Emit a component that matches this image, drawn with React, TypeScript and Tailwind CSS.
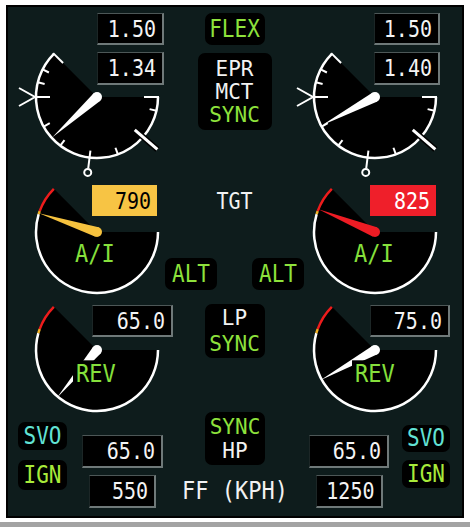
import React from 'react'

type Pt = [number, number]

const R = 61

const polar = (cx: number, cy: number, r: number, deg: number): Pt => {
  const a = (deg * Math.PI) / 180
  return [cx + r * Math.cos(a), cy - r * Math.sin(a)]
}

// arc drawn from `from` to `to` (math degrees, counter-clockwise)
const arcPath = (cx: number, cy: number, r: number, from: number, to: number) => {
  const [x1, y1] = polar(cx, cy, r, from)
  const [x2, y2] = polar(cx, cy, r, to)
  return `M ${x1} ${y1} A ${r} ${r} 0 ${to - from > 180 ? 1 : 0} 0 ${x2} ${y2}`
}

const piePath = (cx: number, cy: number, r: number, from: number, to: number) => {
  const [x1, y1] = polar(cx, cy, r, from)
  const [x2, y2] = polar(cx, cy, r, to)
  return `M ${cx} ${cy} L ${x1} ${y1} A ${r} ${r} 0 ${to - from > 180 ? 1 : 0} 0 ${x2} ${y2} Z`
}

type TickProps = { cx: number; cy: number; deg: number; r1: number; r2: number; w?: number; color?: string }

function Tick({ cx, cy, deg, r1, r2, w = 2, color = '#ffffff' }: TickProps) {
  const [x1, y1] = polar(cx, cy, r1, deg)
  const [x2, y2] = polar(cx, cy, r2, deg)
  return <line x1={x1} y1={y1} x2={x2} y2={y2} stroke={color} strokeWidth={w} />
}

function Needle({ cx, cy, deg, len, w, color }: { cx: number; cy: number; deg: number; len: number; w: number; color: string }) {
  const tip = polar(cx, cy, len, deg)
  const a = polar(cx, cy, w, deg + 90)
  const b = polar(cx, cy, w, deg - 90)
  return (
    <g fill={color}>
      <circle cx={cx} cy={cy} r={w} />
      <polygon points={`${a[0]},${a[1]} ${tip[0]},${tip[1]} ${b[0]},${b[1]}`} />
    </g>
  )
}

function EprDial({ cx, cy, deg, w, h }: { cx: number; cy: number; deg: number; w: number; h: number }) {
  const ring = polar(cx, cy, 76, 263)
  const lim1 = polar(cx, cy, 50, 319)
  const lim2 = polar(cx, cy, 80, 319)
  return (
    <svg width={w} height={h} className="block overflow-visible">
      <path d={piePath(cx, cy, R, 135, 360)} fill="#000" />
      <path d={arcPath(cx, cy, R, 135, 360)} fill="none" stroke="#fff" strokeWidth={2.5} />
      {[153, 166, 209, 233, 290, 347].map((a) => (
        <Tick key={a} cx={cx} cy={cy} deg={a} r1={54} r2={R} />
      ))}
      <Tick cx={cx} cy={cy} deg={135} r1={48} r2={R + 1} />
      <Tick cx={cx} cy={cy} deg={0} r1={47} r2={R + 1} />
      <Tick cx={cx} cy={cy} deg={180} r1={47} r2={R} />
      {/* max-rated chevron */}
      <polyline
        points={`${cx - 78},${cy - 9} ${cx - 62},${cy} ${cx - 78},${cy + 9}`}
        fill="none"
        stroke="#fff"
        strokeWidth={2}
      />
      <Tick cx={cx} cy={cy} deg={263} r1={54} r2={72} />
      <circle cx={ring[0]} cy={ring[1]} r={3.5} fill="none" stroke="#fff" strokeWidth={2} />
      {/* thrust limit bar */}
      <line x1={lim1[0]} y1={lim1[1]} x2={lim2[0]} y2={lim2[1]} stroke="#000" strokeWidth={6} />
      <line x1={lim1[0]} y1={lim1[1]} x2={lim2[0]} y2={lim2[1]} stroke="#fff" strokeWidth={3} />
      <Needle cx={cx} cy={cy} deg={deg} len={60} w={5} color="#fff" />
    </svg>
  )
}

function TgtDial({ cx, cy, deg, color, w, h }: { cx: number; cy: number; deg: number; color: string; w: number; h: number }) {
  return (
    <svg width={w} height={h} className="block overflow-visible">
      <path d={piePath(cx, cy, R, 135, 360)} fill="#000" />
      <path d={arcPath(cx, cy, R, 163, 360)} fill="none" stroke="#fff" strokeWidth={2.5} />
      <path d={arcPath(cx, cy, R, 135, 160)} fill="none" stroke="#ee1c1c" strokeWidth={2.5} />
      <path d={arcPath(cx, cy, R, 160, 163)} fill="none" stroke="#f2b226" strokeWidth={2.5} />
      <Needle cx={cx} cy={cy} deg={deg} len={61} w={5} color={color} />
    </svg>
  )
}

function LpDial({ cx, cy, deg, w, h }: { cx: number; cy: number; deg: number; w: number; h: number }) {
  return (
    <svg width={w} height={h} className="block overflow-visible">
      <path d={piePath(cx, cy, R, 135, 360)} fill="#000" />
      <path d={arcPath(cx, cy, R, 164, 360)} fill="none" stroke="#fff" strokeWidth={2.5} />
      <path d={arcPath(cx, cy, R, 135, 160)} fill="none" stroke="#ee1c1c" strokeWidth={2.5} />
      <path d={arcPath(cx, cy, R, 160, 164)} fill="none" stroke="#f2b226" strokeWidth={2.5} />
      <Needle cx={cx} cy={cy} deg={deg} len={62} w={5} color="#fff" />
    </svg>
  )
}

// display glyphs are a touch taller than the mono face
function T({ children, className = '' }: { children: React.ReactNode; className?: string }) {
  return <span className={`inline-block scale-y-[1.14] ${className}`}>{children}</span>
}

// stacked lines in the mode boxes
function Line({ children, className = '' }: { children: React.ReactNode; className?: string }) {
  return <span className={`block text-[21px] leading-[20px] ${className}`}>{children}</span>
}

function Readout({ value, className }: { value: string; className: string }) {
  return (
    <div
      className={`absolute flex items-center justify-end bg-black pr-[6px] text-[20px] leading-none text-[#f4f4f4] border-t border-l border-r-2 border-b-2 border-t-[#4d5757] border-l-[#1c2626] border-r-[#6f7979] border-b-[#6f7979] ${className}`}
    >
      <T>{value}</T>
    </div>
  )
}

function Tag({ children, className }: { children: React.ReactNode; className: string }) {
  return (
    <div className={`flex items-center justify-center rounded-[7px] bg-black text-[21px] leading-none ${className}`}>
      <T>{children}</T>
    </div>
  )
}

export default function App() {
  return (
    <div className="h-[527px] w-[474px] overflow-hidden bg-white font-['DejaVu_Sans_Mono',monospace]">
      <div className="ml-[6px] mt-[5px] flex h-[513px] w-[458px] flex-col border-2 border-black bg-[#0e1c1c]">
        {/* EPR */}
        <div className="flex h-[173px]">
          <div className="relative w-[157px]">
            <EprDial cx={89} cy={90} deg={222} w={157} h={173} />
            <Readout value="1.50" className="left-[89px] top-[6px] h-[32px] w-[67px]" />
            <Readout value="1.34" className="left-[89px] top-[45px] h-[33px] w-[67px]" />
          </div>
          <div className="flex w-[139px] flex-col items-center pt-[6px]">
            <Tag className="h-[32px] w-[60px] text-[#8ee23c]">FLEX</Tag>
            <div className="mt-[8px] flex h-[77px] w-[74px] flex-col items-center justify-center gap-[3px] rounded-[7px] bg-black">
              <Line className="text-[#f2f2f2]">EPR</Line>
              <Line className="text-[#f2f2f2]">MCT</Line>
              <Line className="text-[#8ee23c]">SYNC</Line>
            </div>
          </div>
          <div className="relative w-[158px]">
            <EprDial cx={71} cy={90} deg={208} w={158} h={173} />
            <Readout value="1.50" className="left-[70px] top-[6px] h-[32px] w-[66px]" />
            <Readout value="1.40" className="left-[70px] top-[45px] h-[33px] w-[66px]" />
          </div>
        </div>

        {/* TGT */}
        <div className="flex h-[115px]">
          <div className="relative w-[157px]">
            <TgtDial cx={89} cy={52} deg={162} color="#f6c23e" w={157} h={115} />
            <div className="absolute left-[84px] top-[5px] flex h-[31px] w-[65px] items-center justify-end bg-[#f7c444] pr-[6px] text-[20px] leading-none text-black">
              <T>790</T>
            </div>
            <T className="absolute left-[67px] top-[63px] text-[22px] leading-[22px] text-[#86e03c]">A/I</T>
          </div>
          <div className="flex w-[139px] flex-col items-center">
            <T className="mt-[9px] text-[20px] leading-[24px] text-[#f2f2f2]">TGT</T>
            <div className="mt-[45px] flex w-full justify-between">
              <Tag className="h-[32px] w-[52px] text-[#8ee23c]">ALT</Tag>
              <Tag className="h-[32px] w-[52px] text-[#8ee23c]">ALT</Tag>
            </div>
          </div>
          <div className="relative w-[158px]">
            <TgtDial cx={71} cy={52} deg={158} color="#ee1c24" w={158} h={115} />
            <div className="absolute left-[66px] top-[5px] flex h-[31px] w-[66px] items-center justify-end bg-[#ef1f2a] pr-[6px] text-[20px] leading-none text-white">
              <T>825</T>
            </div>
            <T className="absolute left-[50px] top-[63px] text-[22px] leading-[22px] text-[#86e03c]">A/I</T>
          </div>
        </div>

        {/* LP */}
        <div className="flex h-[117px]">
          <div className="relative w-[157px]">
            <LpDial cx={89} cy={55} deg={230} w={157} h={117} />
            <Readout value="65.0" className="left-[84px] top-[10px] h-[32px] w-[81px]" />
            <T className="absolute left-[65px] top-[67px] bg-black px-[3px] text-[22px] leading-[24px] text-[#86e03c]">REV</T>
          </div>
          <div className="flex w-[139px] flex-col items-center pt-[9px]">
            <div className="flex h-[54px] w-[60px] flex-col items-center justify-center gap-[6px] rounded-[7px] bg-black">
              <Line className="text-[#f2f2f2]">LP</Line>
              <Line className="text-[#8ee23c]">SYNC</Line>
            </div>
          </div>
          <div className="relative w-[158px]">
            <LpDial cx={71} cy={55} deg={209} w={158} h={117} />
            <Readout value="75.0" className="left-[66px] top-[10px] h-[32px] w-[80px]" />
            <T className="absolute left-[48px] top-[67px] bg-black px-[3px] text-[22px] leading-[24px] text-[#86e03c]">REV</T>
          </div>
        </div>

        {/* fuel flow / ignition */}
        <div className="flex h-[104px]">
          <div className="ml-[10px] mt-[10px] flex w-[49px] flex-col gap-[10px]">
            <Tag className="h-[28px] w-[49px] text-[#62e2d4]">SVO</Tag>
            <Tag className="h-[30px] w-[49px] text-[#a8ea3a]">IGN</Tag>
          </div>
          <div className="ml-[15px] mt-[23px] flex w-[81px] flex-col items-center gap-[7px]">
            <div className="relative h-[33px] w-[81px]">
              <Readout value="65.0" className="inset-0" />
            </div>
            <div className="relative h-[33px] w-[67px]">
              <Readout value="550" className="inset-0" />
            </div>
          </div>
          <div className="flex w-[144px] flex-col items-center">
            <div className="flex h-[53px] w-[60px] flex-col items-center justify-center gap-[4px] rounded-[7px] bg-black">
              <Line className="text-[#8ee23c]">SYNC</Line>
              <Line className="text-[#f2f2f2]">HP</Line>
            </div>
            <T className="mt-[14px] whitespace-pre text-[22px] leading-[24px] text-[#f2f2f2]">FF (KPH)</T>
          </div>
          <div className="ml-[2px] mt-[23px] flex w-[80px] flex-col items-center gap-[7px]">
            <div className="relative h-[33px] w-[80px]">
              <Readout value="65.0" className="inset-0" />
            </div>
            <div className="relative h-[33px] w-[67px]">
              <Readout value="1250" className="inset-0" />
            </div>
          </div>
          <div className="ml-[13px] mt-[13px] flex w-[48px] flex-col gap-[8px]">
            <Tag className="h-[27px] w-[48px] text-[#62e2d4]">SVO</Tag>
            <Tag className="h-[28px] w-[48px] text-[#a8ea3a]">IGN</Tag>
          </div>
        </div>
      </div>
      <div className="mt-[4px] h-[5px] w-[470px] bg-[#a3a3a3]" />
    </div>
  )
}
